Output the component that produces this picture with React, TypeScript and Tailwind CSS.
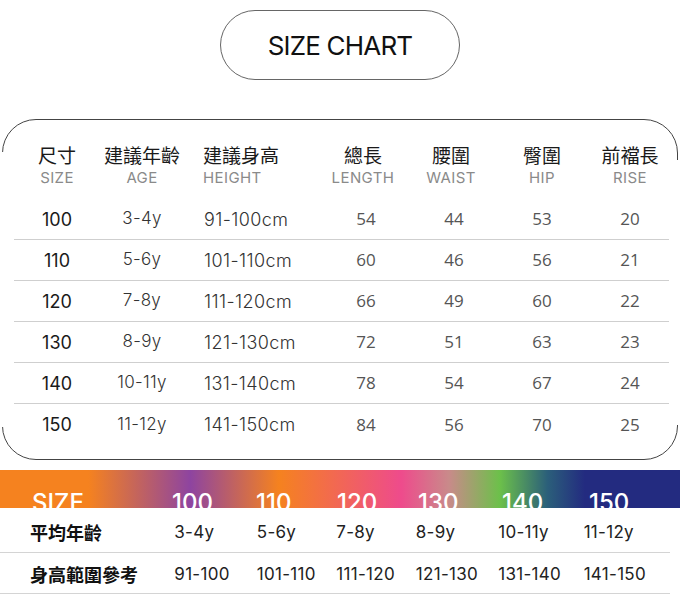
import React from "react";

const sizes = [
  { size: "100", age: "3-4y", height: "91-100cm", length: "54", waist: "44", hip: "53", rise: "20" },
  { size: "110", age: "5-6y", height: "101-110cm", length: "60", waist: "46", hip: "56", rise: "21" },
  { size: "120", age: "7-8y", height: "111-120cm", length: "66", waist: "49", hip: "60", rise: "22" },
  { size: "130", age: "8-9y", height: "121-130cm", length: "72", waist: "51", hip: "63", rise: "23" },
  { size: "140", age: "10-11y", height: "131-140cm", length: "78", waist: "54", hip: "67", rise: "24" },
  { size: "150", age: "11-12y", height: "141-150cm", length: "84", waist: "56", hip: "70", rise: "25" },
];

const bandCols = ["w-[84px]", "w-[81px]", "w-[81px]", "w-[84px]", "w-[87px]", "w-[88px]"];

const cjk = "font-['Noto_Sans_CJK_TC','Noto_Sans',sans-serif]";
const latin = "font-['Inter','Noto_Sans',sans-serif]";
const soft = "font-['Open_Sans','Noto_Sans',sans-serif]";

export default function App() {
  return (
    <div className="w-[680px] h-[604px] bg-white overflow-hidden">
      {/* title pill */}
      <div className="flex justify-center pt-[10px]">
        <div className="w-[240px] h-[70px] rounded-full border border-[#666] flex items-center justify-center">
          <span className={`${latin} text-[26px] font-normal tracking-[-0.8px] text-[#111]`}>SIZE CHART</span>
        </div>
      </div>

      {/* card */}
      <div className="relative mt-[39px] mx-[2px] h-[341px] rounded-[34px] border border-[#444]">
        <div className="absolute -left-[2px] top-[32px] bottom-[32px] w-[4px] bg-white" />
        <div className="absolute -right-[2px] top-[40px] bottom-[34px] w-[4px] bg-white" />

        <div className="relative flex flex-col pl-[11px]">
          <div className="flex pl-[3px] pt-[22px] h-[79px] whitespace-nowrap">
            {[
              ["尺寸", "SIZE", "w-[80px] items-center"],
              ["建議年齡", "AGE", "w-[90px] items-center"],
              ["建議身高", "HEIGHT", "w-[120px] items-start pl-[16px]"],
              ["總長", "LENGTH", "w-[112px] items-center"],
              ["腰圍", "WAIST", "w-[64px] items-center"],
              ["臀圍", "HIP", "w-[118px] items-center"],
              ["前襠長", "RISE", "w-[58px] items-center"],
            ].map(([zh, en, cls]) => (
              <div key={en} className={`flex flex-col ${cls}`}>
                <span className={`${cjk} text-[19px] leading-[26px] text-[#1a1a1a]`}>{zh}</span>
                <span className={`${latin} text-[15px] leading-[20px] tracking-[0.4px] text-[#8a8a8a]`}>{en}</span>
              </div>
            ))}
          </div>

          {sizes.map((r, i) => (
            <div
              key={r.size}
              className={`flex items-center pl-[3px] w-[655px] h-[41px] whitespace-nowrap ${i < sizes.length - 1 ? "border-b border-[#cfcfcf]" : ""}`}
            >
              <span className={`${latin} w-[80px] text-center text-[18px] text-[#1a1a1a]`}>{r.size}</span>
              <span className={`${latin} w-[90px] text-center text-[17px] font-light tracking-[0.3px] text-[#333]`}>{r.age}</span>
              <span className={`${latin} w-[120px] pl-[17px] text-[18px] font-light tracking-[0.4px] text-[#333]`}>{r.height}</span>
              <span className={`${soft} w-[112px] pl-[6px] text-center text-[17px] text-[#555]`}>{r.length}</span>
              <span className={`${soft} w-[64px] pl-[6px] text-center text-[17px] text-[#555]`}>{r.waist}</span>
              <span className={`${soft} w-[118px] text-center text-[17px] text-[#555]`}>{r.hip}</span>
              <span className={`${soft} w-[58px] text-center text-[17px] text-[#555]`}>{r.rise}</span>
            </div>
          ))}
        </div>
      </div>

      {/* gradient band */}
      <div className="mt-[10px] h-[38px] overflow-hidden bg-[linear-gradient(to_right,#f5821f_0%,#f5821f_13%,#8e44a0_28%,#f5821f_41%,#ee4b8c_59%,#c98a8a_66%,#6cc04a_73.5%,#2b5f7a_80.5%,#232b80_86%,#232b80_100%)]">
        <div className={`${latin} flex pt-[21px] pl-[32px] text-[24px] leading-none font-medium text-white`}>
          <span className="w-[140px]">SIZE</span>
          {["100", "110", "120", "130", "140", "150"].map((s, i) => (
            <span key={s} className={bandCols[i]}>{s}</span>
          ))}
        </div>
      </div>

      {/* age / height table */}
      <div className="flex flex-col w-[670px]">
        <div className="flex items-center h-[45px] pt-[5px] pl-[30px] border-b border-[#d4d4d4]">
          <span className={`${cjk} w-[147px] text-[18px] font-bold text-[#111]`}>平均年齡</span>
          {["3-4y", "5-6y", "7-8y", "8-9y", "10-11y", "11-12y"].map((v, i) => (
            <span key={v} className={`${latin} ${bandCols[i]} text-[17px] tracking-[0.3px] text-[#222]`}>{v}</span>
          ))}
        </div>
        <div className="flex items-center h-[41px] pt-[3px] pl-[30px] border-b border-[#d4d4d4]">
          <span className={`${cjk} w-[147px] text-[18px] font-bold text-[#111]`}>身高範圍參考</span>
          {["91-100", "101-110", "111-120", "121-130", "131-140", "141-150"].map((v, i) => (
            <span key={v} className={`${latin} ${bandCols[i]} text-[17px] tracking-[0.3px] text-[#222]`}>{v}</span>
          ))}
        </div>
      </div>
    </div>
  );
}
